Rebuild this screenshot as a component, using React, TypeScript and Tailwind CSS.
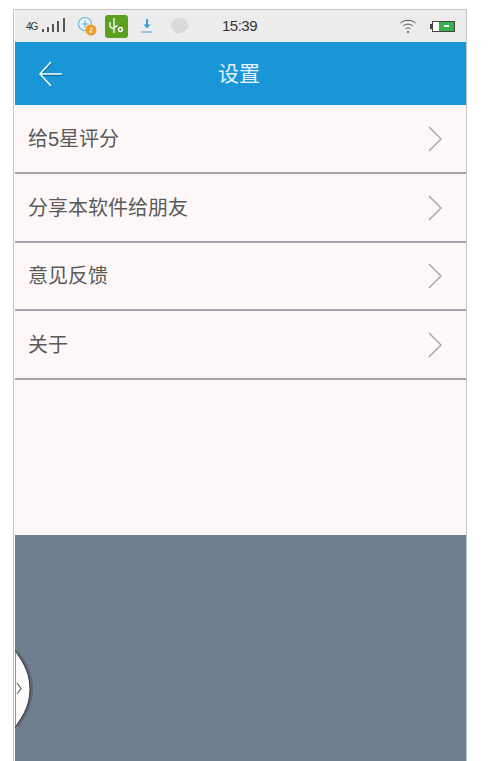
const ROWS = ['给5星评分', '分享本软件给朋友', '意见反馈', '关于']
const ROW_HEIGHTS = ['h-[69px]', 'h-[69px]', 'h-[68px]', 'h-[69px]']
const FONT = '"Liberation Sans", "Noto Sans CJK SC", sans-serif'

function SignalBars() {
  return (
    <svg width="26" height="18" viewBox="0 0 26 18">
      <rect x="1" y="12" width="2" height="3" fill="#555" />
      <rect x="6" y="10" width="2" height="5" fill="#555" />
      <rect x="11" y="7" width="2" height="8" fill="#555" />
      <rect x="16" y="4" width="2" height="11" fill="#555" />
      <rect x="22" y="1" width="2" height="14" fill="#555" />
    </svg>
  )
}

function StatusBar() {
  return (
    <div className="flex h-[32px] items-center bg-[#ececec] pl-[11px] pr-[11px]">
      <span className="w-[15px] text-[10px] tracking-[-1px] text-[#333]">4G</span>
      <SignalBars />
      {/* qq-style circle with orange badge */}
      <svg width="20" height="20" viewBox="0 0 20 20" className="ml-[10px]">
        <circle cx="8" cy="8" r="6.500" fill="#eaf3f8" stroke="#6fb0d6" strokeWidth="1.200" />
        <path d="M8 4.500v7M4.500 8h7" stroke="#6fb0d6" strokeWidth="1.200" />
        <circle cx="14" cy="14" r="5.500" fill="#f09a28" />
        <path d="M12.500 12.500c1-1.200 3-.6 2.800.6-.1.800-2 2-2.800 3h3" stroke="#fff" strokeWidth="1" fill="none" />
      </svg>
      <div className="ml-[8px] flex h-[23px] w-[23px] items-center justify-center rounded-[3px] bg-[#5ca022]">
        <svg width="18" height="18" viewBox="0 0 18 18" fill="none" stroke="#fff" strokeWidth="1.300">
          <path d="M6 1v15M2 5v4c0 1.500 1 2 4 3M6 10c2 0 3-.5 3-2" />
          <circle cx="12.500" cy="12.500" r="2" />
        </svg>
      </div>
      <svg width="14" height="16" viewBox="0 0 14 16" className="ml-[12px]" fill="none">
        <path d="M7 1v7" stroke="#3b9bd6" strokeWidth="2" />
        <path d="M3.500 6.500h7L7 10.500z" fill="#3b9bd6" />
        <path d="M1.500 14h11" stroke="#7db9de" strokeWidth="1.500" />
      </svg>
      <svg width="19" height="19" viewBox="0 0 19 19" className="ml-[16px]">
        <ellipse cx="9.500" cy="8.500" rx="8.500" ry="7.500" fill="#d9d9d9" />
        <path d="M6 14l-1 4 5-3z" fill="#d9d9d9" />
      </svg>
      <span className="ml-[33px] text-[15px] tracking-[-0.5px] text-[#333]">15:39</span>
      <svg width="18" height="16" viewBox="0 0 18 16" fill="none" stroke="#555" strokeWidth="1" className="ml-auto">
        <path d="M1.500 5c4-3.600 11-3.600 15 0M4 8c2.800-2.400 7.200-2.400 10 0M6.500 10.800c1.500-1.100 3.500-1.100 5 0" />
        <circle cx="9" cy="14" r="1" fill="#555" stroke="none" />
      </svg>
      <div className="ml-[13px] flex items-center">
        <div className="h-[5px] w-[2px] bg-[#444]" />
        <div className="flex h-[11px] w-[23px] justify-end border border-[#444] bg-white">
          <div className="flex w-[15px] items-center justify-center bg-[#35b04a]">
            <div className="h-[2px] w-[5px] bg-white" />
          </div>
        </div>
      </div>
    </div>
  )
}

function Row({ label, height }: { label: string; height: string }) {
  return (
    <div className={`flex ${height} items-center justify-between border-b-2 border-b-[#a3a3ab] pl-[13px] pr-[24px]`}>
      <span className="text-[20px] text-[#5a5a5a]">{label}</span>
      <svg width="14" height="26" viewBox="0 0 14 26" fill="none" stroke="#a8a8a8" strokeWidth="1.500">
        <path d="M1 1l12 12L1 25" />
      </svg>
    </div>
  )
}

export default function App() {
  return (
    <div className="h-[761px] w-[493px] overflow-hidden bg-white pt-[9px] pl-[13px]" style={{ fontFamily: FONT }}>
      <div className="relative flex h-[752px] w-[454px] flex-col border-t border-r border-l border-[#c4c4c4] pl-px">
        <StatusBar />
        {/* titlebar */}
        <div className="relative flex h-[63px] items-center justify-center bg-[#1896d8] pr-[3px]">
          <svg width="26" height="28" viewBox="0 0 26 28" fill="none" strokeWidth="1.500" className="absolute left-[23px] top-[18px]">
            <path d="M13 2L2 14l11 12M2 14h22" stroke="#0d3f5f" transform="translate(0.500 1)" opacity="0.6" />
            <path d="M13 2L2 14l11 12M2 14h22" stroke="#fff" />
          </svg>
          <span className="text-[21px] text-[#e6f3fa]">设置</span>
        </div>
        <div className="h-[430px] bg-[#fdf8f7]">
          {ROWS.map((r, i) => <Row key={r} label={r} height={ROW_HEIGHTS[i]} />)}
        </div>
        <div className="flex-1 bg-[#6f7f8f]" />
        {/* floating side tab */}
        <div className="absolute left-px top-[639px] h-[80px] w-[24px] overflow-hidden">
          <svg width="24" height="80" viewBox="0 0 24 80">
            <path d="M0 1 C5 10 15 20 15 40 C15 60 5 70 0 79 Z" fill="#3f4750" opacity="0.4" transform="translate(3 0)" />
            <path d="M0 1 C5 10 15 20 15 40 C15 60 5 70 0 79 Z" fill="#fbfbfb" stroke="#333" strokeWidth="1" />
            <path d="M2 34l4 5.500-4 5.500" fill="none" stroke="#666" strokeWidth="1.200" />
          </svg>
        </div>
      </div>
    </div>
  )
}
